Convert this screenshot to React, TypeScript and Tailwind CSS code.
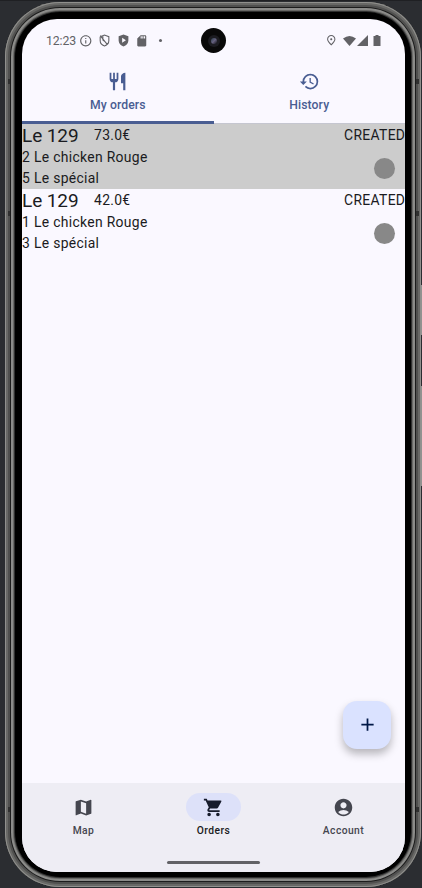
import React from "react";
import {
  MdAccountCircle,
  MdAdd,
  MdHistory,
  MdInfoOutline,
  MdMap,
  MdOutlinePlace,
  MdRestaurant,
  MdSdCard,
  MdShoppingCart,
} from "react-icons/md";

type Order = { place: string; price: string; status: string; lines: string[]; selected: boolean };

const orders: Order[] = [
  { place: "Le 129", price: "73.0€", status: "CREATED", lines: ["2 Le chicken Rouge", "5 Le spécial"], selected: true },
  { place: "Le 129", price: "42.0€", status: "CREATED", lines: ["1 Le chicken Rouge", "3 Le spécial"], selected: false },
];

function StatusBar() {
  return (
    <div className="relative h-[43px] shrink-0 text-[#626266]">
      <div className="flex h-full items-center pl-6 pr-[23px]">
        <span className="w-[33px] pt-px text-[12.3px] leading-none tracking-[-0.1px]">12:23</span>
        <MdInfoOutline className="size-[13.5px]" />
        <svg className="ml-[5px] size-[13px]" viewBox="0 0 24 24" fill="none" stroke="currentColor" strokeWidth="2">
          <path d="M5 4.500 12 2l8 3v7c0 4.500-3.500 8.500-8 10-4.500-1.500-8-5.500-8-10V5M4 3l13 16M9 4v7l5 4" />
        </svg>
        <svg className="ml-[6px] size-[13px]" viewBox="0 0 24 24" fill="currentColor">
          <path fillRule="evenodd" d="M12 1 3 4v8c0 5 3.800 9.500 9 11 5.200-1.500 9-6 9-11V4zM9.500 7v9l7-4.500z" />
        </svg>
        <MdSdCard className="ml-[5px] size-[13.5px]" />
        <span className="ml-[11px] size-[3px] rounded-full bg-current" />
        <MdOutlinePlace className="ml-auto size-[12.500px]" />
        <svg className="ml-[6px] h-[10px] w-[13px]" viewBox="0 0 13 10" fill="currentColor">
          <path d="M0 2.500Q6.500-2.500 13 2.500L6.500 10z" />
        </svg>
        <svg className="ml-[1px] size-[11px]" viewBox="0 0 11 11" fill="currentColor">
          <path d="M11 0v11H0z" />
        </svg>
        <svg className="ml-[5px] mr-px h-[11px] w-[8px]" viewBox="0 0 8 11" fill="currentColor">
          <path d="M2.500 0h3v1H7.500v10H.5V1h2z" />
        </svg>
      </div>
      <div className="absolute left-[179px] top-[9px] flex size-[25px] items-center justify-center rounded-full bg-[#090909]">
        <div className="flex size-[12px] items-center justify-center rounded-full bg-[#1c1c21]">
          <div className="size-[6px] rounded-full bg-linear-to-br from-[#2a4150] via-[#66617f] to-[#15151c]" />
        </div>
      </div>
    </div>
  );
}

function Tabs() {
  return (
    <div className="relative grid h-[62px] shrink-0 grid-cols-2 border-b border-[#c5c6d0] text-[12.2px] font-medium tracking-[0.09px] text-[#495d92]">
      <div className="flex flex-col items-center pt-[9px]">
        <MdRestaurant className="size-[21px]" />
        <span className="mt-[5px] leading-[17px]">My orders</span>
      </div>
      <div className="flex flex-col items-center pt-[9px]">
        <MdHistory className="size-[21px]" />
        <span className="mt-[5px] leading-[17px]">History</span>
      </div>
      <div className="absolute -bottom-px left-0 h-[3px] w-1/2 bg-[#495d92]" />
    </div>
  );
}

function OrderRow({ order }: { order: Order }) {
  return (
    <div className={`flex h-[65px] justify-between text-[13.900px] tracking-[0.320px] text-[#1a1b21] ${order.selected ? "bg-[#cccccc]" : ""}`}>
      <div>
        <div className="flex h-[23px] items-center">
          <span className="w-[72px] text-[19px] leading-none tracking-[-0.100px]">{order.place}</span>
          <span className="pt-px leading-none">{order.price}</span>
        </div>
        {order.lines.map((line) => (
          <div key={line} className="h-[20.500px] leading-[20.500px]">{line}</div>
        ))}
      </div>
      <div className="flex flex-col items-end">
        <span className="-mr-[0.300px] flex h-6 items-center leading-none">{order.status}</span>
        <span className="mr-[10px] mt-[10px] size-[21px] rounded-full bg-[#888888]" />
      </div>
    </div>
  );
}

function BottomNav() {
  return (
    <div className="h-[89px] shrink-0 bg-[#eeedf4] text-[10.300px] font-medium tracking-[0.430px] text-[#45464f]">
      <div className="flex h-[78px] justify-between pt-[10px]">
        <div className="flex w-[123px] flex-col items-center">
          <div className="flex h-7 w-14 items-center justify-center"><MdMap className="size-[21px]" /></div>
          <span className="mt-[2px] leading-[15px]">Map</span>
        </div>
        <div className="flex w-[123px] flex-col items-center text-[#1a1b21]">
          <div className="flex h-7 w-[55px] items-center justify-center rounded-full bg-[#dde1f9]">
            <MdShoppingCart className="size-[21px] text-[#161b2c]" />
          </div>
          <span className="mt-[2px] leading-[15px]">Orders</span>
        </div>
        <div className="flex w-[123px] flex-col items-center">
          <div className="flex h-7 w-14 items-center justify-center"><MdAccountCircle className="size-[21px]" /></div>
          <span className="mt-[2px] leading-[15px]">Account</span>
        </div>
      </div>
      <div className="mx-auto h-[3px] w-[93px] rounded-full bg-[#626266]" />
    </div>
  );
}

function AntennaBands() {
  return (
    <>
      <div className="absolute left-[3px] top-[77px] h-[5px] w-[2px] bg-[#303030]" />
      <div className="absolute left-[3px] top-[209px] h-[5px] w-[2px] bg-[#303030]" />
      <div className="absolute left-[3px] top-[805px] h-[5px] w-[2px] bg-[#303030]" />
      <div className="absolute right-[2px] top-[77px] h-[5px] w-[3px] bg-[#303030]" />
      <div className="absolute right-[2px] top-[209px] h-[5px] w-[3px] bg-[#303030]" />
      <div className="absolute right-[2px] top-[805px] h-[5px] w-[3px] bg-[#303030]" />
    </>
  );
}

export default function App() {
  return (
    <div className="relative h-[888px] w-[422px] overflow-hidden border-t border-[#1f2023] bg-[#2b2d31] pl-[5px] pt-px font-[Roboto,sans-serif]">
      <div className="absolute left-[420px] top-[284px] h-[50px] w-[2px] bg-[#929290]" />
      <div className="absolute left-[420px] top-[385px] h-[100px] w-[2px] bg-[#929290]" />
      <div className="relative h-[885px] w-[416px] rounded-[55px] bg-black pl-[17px] pt-[17px] shadow-[inset_0_0_0_1px_#90908d,inset_0_0_0_3px_#686866,inset_0_0_0_5px_#50504f,inset_0_0_0_6px_#1c1c1c,inset_0_0_0_8px_#8b8b89,inset_0_0_0_9px_#686866,inset_0_0_0_10px_#303030]">
        <div className="flex h-[853px] w-[383px] flex-col overflow-hidden rounded-[35px] bg-[#faf8ff]">
          <StatusBar />
          <Tabs />
          <div className="relative min-h-0 flex-1">
            {orders.map((order) => <OrderRow key={order.price} order={order} />)}
            <button className="absolute bottom-[34px] right-[14px] flex size-12 items-center justify-center rounded-[14px] bg-[#dae2ff] text-[#001847] shadow-[0_5px_9px_rgba(0,0,0,0.270)]">
              <MdAdd className="mb-px size-[21px]" />
            </button>
          </div>
          <BottomNav />
        </div>
        <AntennaBands />
      </div>
    </div>
  );
}
